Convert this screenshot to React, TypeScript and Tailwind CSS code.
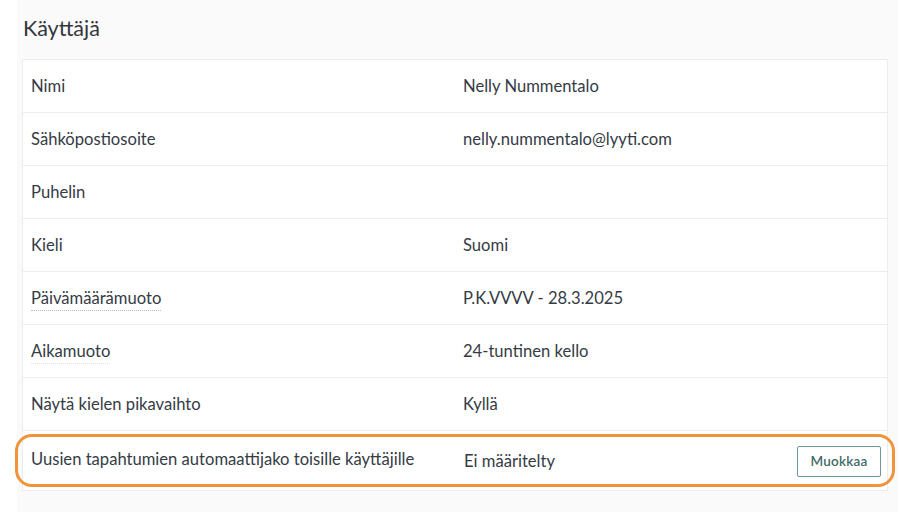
const rows: { label: string; value: string; hint?: "strong" | "soft" }[] = [
  { label: "Nimi", value: "Nelly Nummentalo" },
  { label: "Sähköpostiosoite", value: "nelly.nummentalo@lyyti.com" },
  { label: "Puhelin", value: "" },
  { label: "Kieli", value: "Suomi" },
  { label: "Päivämäärämuoto", value: "P.K.VVVV - 28.3.2025", hint: "strong" },
  { label: "Aikamuoto", value: "24-tuntinen kello", hint: "soft" },
  { label: "Näytä kielen pikavaihto", value: "Kyllä" },
];

function Label({ text, hint }: { text: string; hint?: "strong" | "soft" }) {
  if (!hint) return <span>{text}</span>;
  return (
    <span className={hint === "strong" ? "border-b border-dotted border-[#b8bcc2] pb-[2px]" : "border-b border-dotted border-[#dfe1e4] pb-[2px]"}>
      {text}
    </span>
  );
}

export default function App() {
  return (
    <div className="min-h-[512px] w-[914px] bg-white font-['Lato',sans-serif] text-[16.6px] text-[#353b45]">
      <div className="ml-[17px] mr-[16px] min-h-[512px] bg-[#fafafa] pl-[5px] pr-[10px] pt-[13px]">
        <h1 className="pl-[1px] text-[21.5px] leading-[30px] text-[#33373d]">Käyttäjä</h1>
        <div className="mt-[16px] border border-[#ececec] bg-white">
          {rows.map((r) => (
            <div key={r.label} className="grid h-[53px] grid-cols-2 items-center border-b border-[#ededed]">
              <div className="pl-[8px]"><Label text={r.label} hint={r.hint} /></div>
              <div className="pl-[8px]">{r.value}</div>
            </div>
          ))}
          <div className="p-[3px]">
            <div className="mx-[-11px] grid h-[53px] grid-cols-2 items-center rounded-[17px] border-[3px] border-[#f0943a] pl-[13px] pr-[11px]">
              <div className="pb-[3px]">Uusien tapahtumien automaattijako toisille käyttäjille</div>
              <div className="flex items-center justify-between pl-[8px] pt-[1px]">
                <span>Ei määritelty</span>
                <button className="h-[31px] w-[84px] rounded-[2px] border border-[#6e9a95] text-[13.5px] font-semibold tracking-[0.2px] text-[#3f6b66]">
                  Muokkaa
                </button>
              </div>
            </div>
          </div>
        </div>
      </div>
    </div>
  );
}
